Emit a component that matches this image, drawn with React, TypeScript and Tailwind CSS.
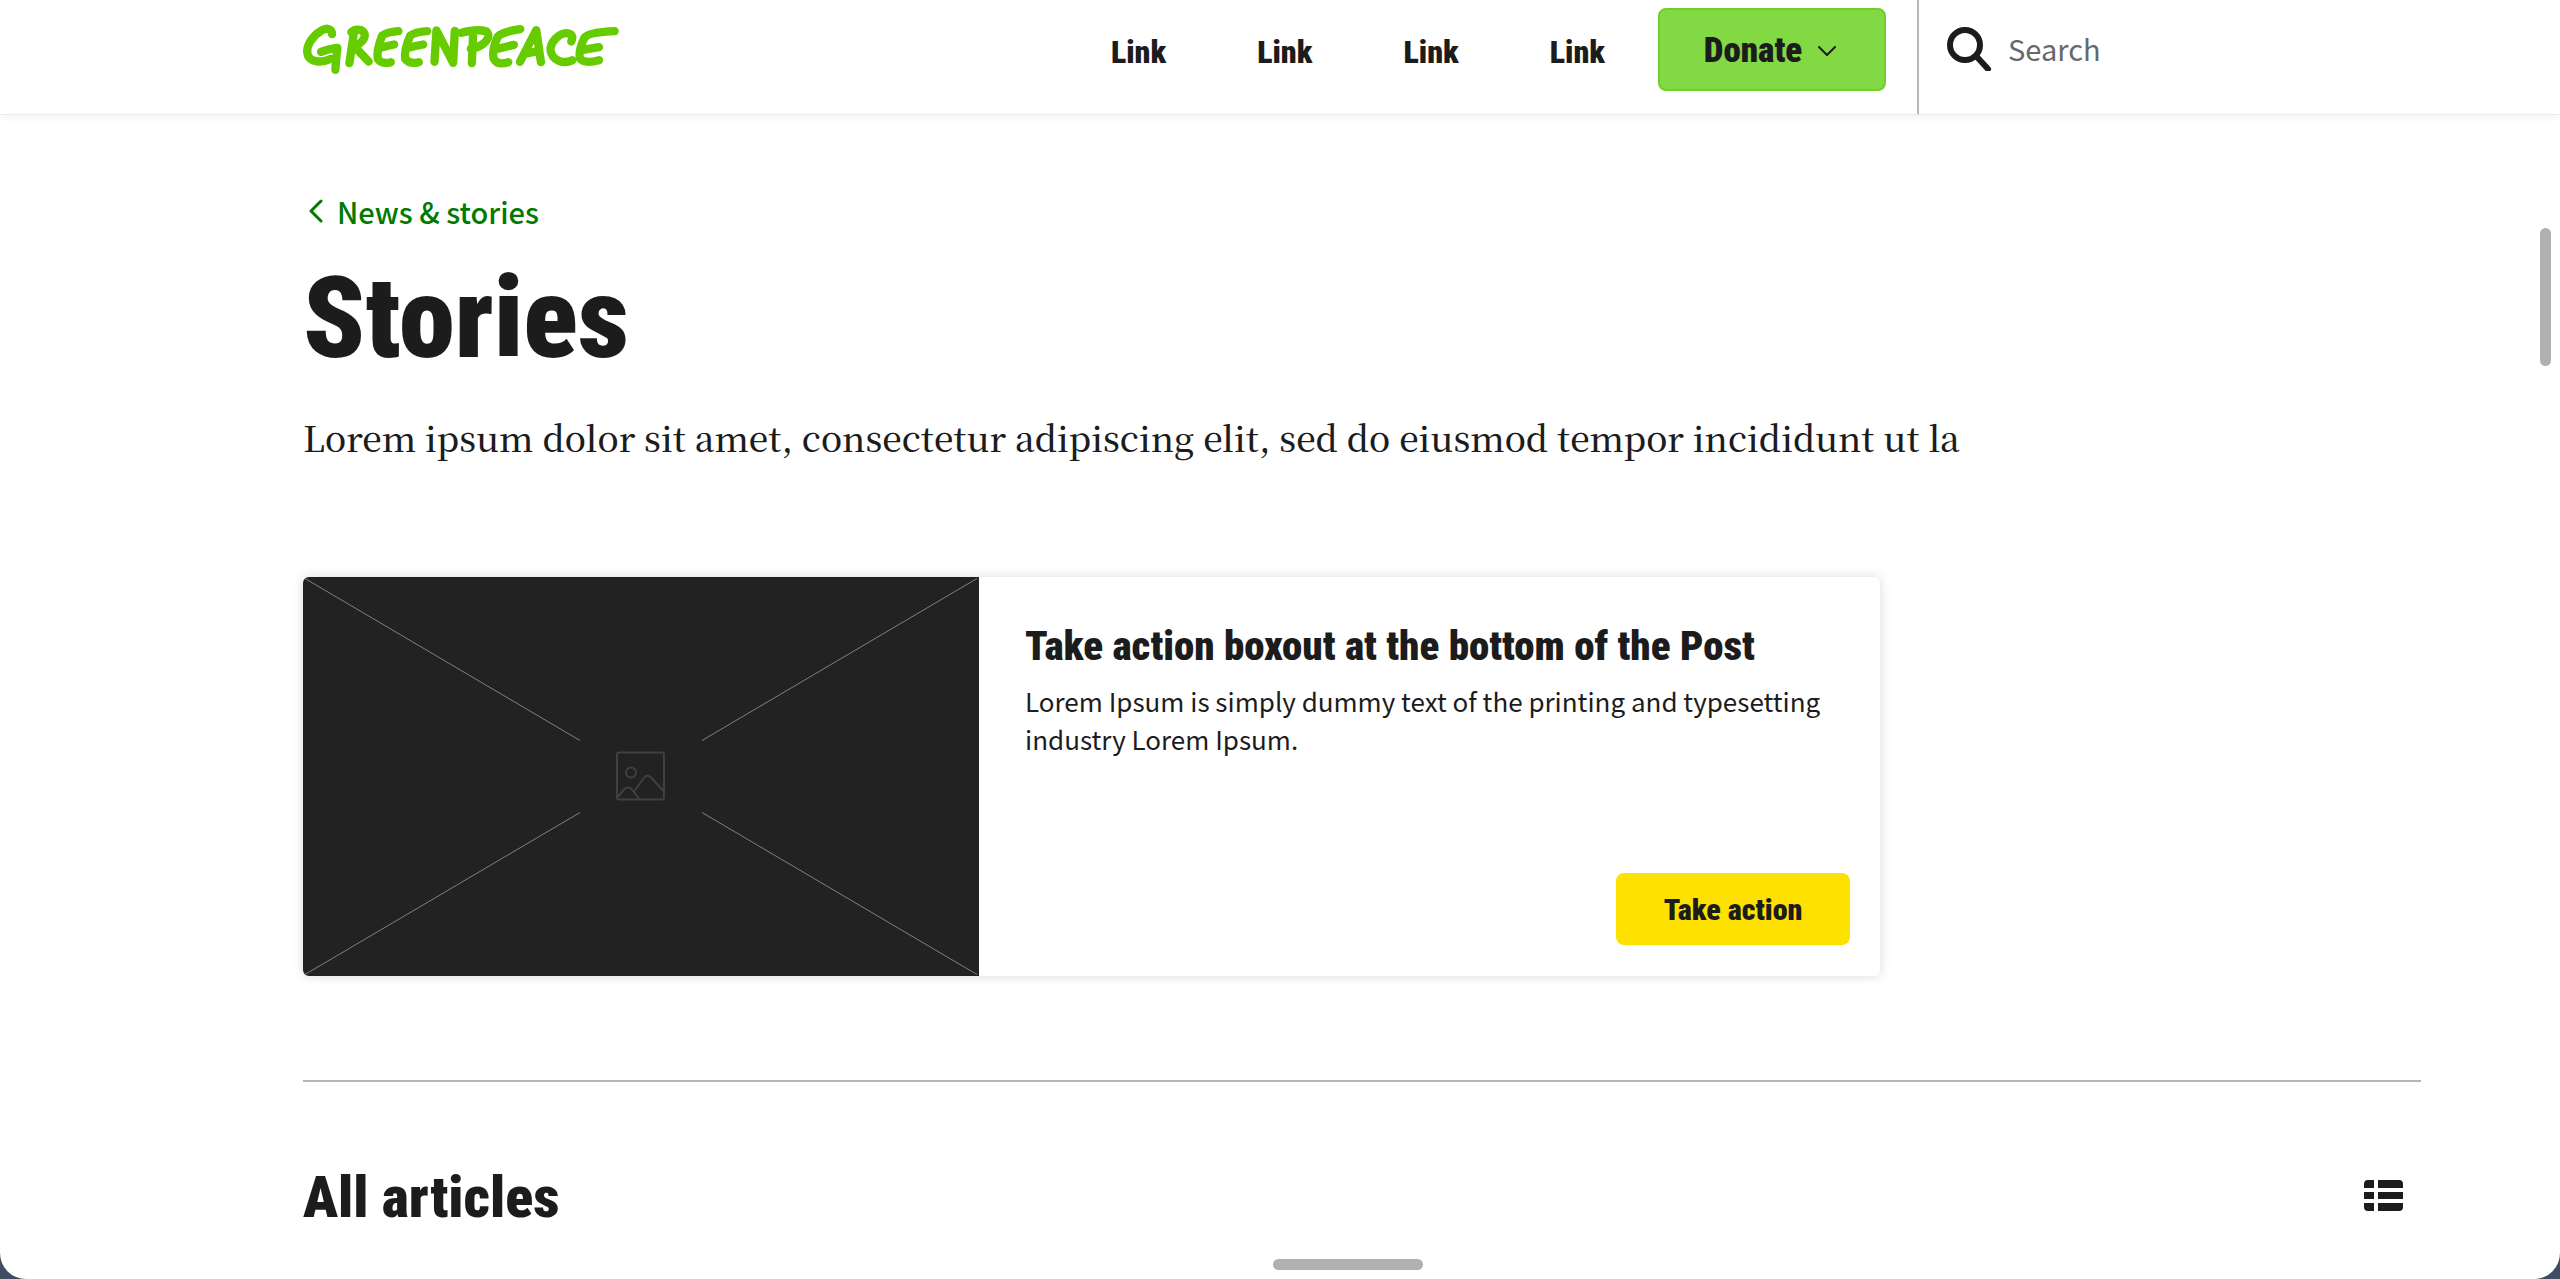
import { useState } from 'react';

const links = ['Link', 'Link', 'Link', 'Link'];

function Logo() {
  return (
    <svg
      role="img"
      aria-label="Greenpeace"
      viewBox="38 74 950 152"
      className="w-[317px] h-[51px]"
      fill="none"
      stroke="#66cc00"
      strokeWidth="25"
      strokeLinecap="round"
      strokeLinejoin="round"
    >
      <path d="M125 104C124 86 108 84 92 94C64 110 48 140 51 160C54 188 92 192 122 178" />
      <path d="M92 157Q112 149 141 145Q138 170 135 211" />
      <path d="M190 104L177 191M183 98Q194 88 212 92Q232 103 216 124Q206 136 192 141L235 186" />
      <path d="M324 95Q290 97 275 109Q258 150 262 178Q274 195 301 188M270 145Q290 139 311 135" />
      <path d="M410 95Q374 97 359 109Q341 150 344 178Q358 195 385 188M354 145Q374 139 398 135" />
      <path d="M438 93L432 187M440 97L488 190M493 94L488 190" />
      <path d="M548 98L544 191M513 100Q560 87 588 96Q603 112 578 133Q562 145 541 148" />
      <path d="M689 89Q636 97 622 111Q604 150 609 176Q620 199 653 188M616 149Q640 143 670 136" />
      <path d="M688 187L737 92L751 188M708 162L744 154" />
      <path d="M842 126Q852 103 828 101C804 101 778 130 780 152C784 184 820 195 845 182" />
      <path d="M972 95Q896 98 882 114Q864 150 867 176Q880 194 925 182M872 152Q896 148 925 143" />
    </svg>
  );
}

function Placeholder() {
  return (
    <div className="w-[676px] shrink-0 bg-[#222222]">
      <svg viewBox="0 0 676 398" className="block w-full h-full" fill="none" strokeWidth="1">
        <path
          stroke="#808080"
          d="M2 1L277 163M674 1L399 163M2 397L277 235M674 397L399 235"
        />
        <g stroke="#404040" strokeWidth="2" strokeLinejoin="round">
          <rect x="314" y="175" width="47" height="47" rx="2" />
          <circle cx="328" cy="195" r="5" />
          <path d="M315 219L322 211Q325 209 328 211L336 221M331 214L342 199Q345 197 348 200L361 214" />
        </g>
      </svg>
    </div>
  );
}

export default function App() {
  const [search, setSearch] = useState('');

  return (
    <div className="bg-[#3f4d63]">
      <div className="relative min-h-screen overflow-hidden rounded-b-[26px] bg-white text-[#1c1c1c] font-['Noto_Sans_CJK_JP','Noto_Sans',sans-serif]">
        <header className="flex items-stretch pl-[303px] border-b border-[#ebebeb] shadow-[0_2px_8px_rgba(0,0,0,0.06)]">
          <a href="#home" className="pt-6">
            <Logo />
          </a>
          <nav className="ml-auto flex items-start gap-[91px] pt-8 pr-[53px] font-['Roboto_Condensed',Roboto,sans-serif] text-[32px] leading-10 font-black">
            {links.map((link, i) => (
              <a key={i} href="#link">
                {link}
              </a>
            ))}
          </nav>
          <div className="pt-2 pb-[23px] pr-[31px]">
            <button className="flex h-[83px] w-[228px] items-center justify-center gap-4 rounded-lg border-2 border-[#6fd02c] bg-[#82d944] pt-1 pr-1 font-['Roboto_Condensed',Roboto,sans-serif] text-[35px] font-black">
              Donate
              <svg viewBox="0 0 18 11" className="w-[18px] h-[11px]" fill="none" stroke="#1c1c1c" strokeWidth="2" strokeLinecap="round" strokeLinejoin="round">
                <path d="M1 1L9 9L17 1" />
              </svg>
            </button>
          </div>
          <label className="flex w-[643px] items-center gap-4 border-l-2 border-[#b5b5b5] pl-[27px] pb-[18px]">
            <svg viewBox="0 0 46 46" className="w-[46px] h-[46px]" fill="none" stroke="#1c1c1c" strokeLinecap="round">
              <circle cx="19" cy="20" r="15" strokeWidth="6" />
              <path d="M31 32L42 44" strokeWidth="6" />
            </svg>
            <input
              type="search"
              aria-label="Search"
              placeholder="Search"
              value={search}
              onChange={(e) => setSearch(e.target.value)}
              className="w-80 text-[29px] leading-10 outline-none placeholder:text-[#65696c]"
            />
          </label>
        </header>

        <main className="pl-[303px] pr-[139px] pt-[78px] pb-12">
          <a href="#news" className="inline-flex items-center gap-[13px] pl-[5px] text-[29px] leading-9 font-medium text-[#007a00]">
            <svg viewBox="0 0 16 24" className="w-4 h-6" fill="none" stroke="#007a00" strokeWidth="3" strokeLinecap="round" strokeLinejoin="round">
              <path d="M13 2L3 12L13 22" />
            </svg>
            News &amp; stories
          </a>
          <h1 className="mt-[26px] font-['Roboto_Condensed',Roboto,sans-serif] text-[113px] leading-[128px] font-black">
            Stories
          </h1>
          <p className="mt-[26px] font-['Noto_Serif_CJK_JP','Liberation_Serif',serif] text-[35px] leading-[56px] font-medium">
            Lorem ipsum dolor sit amet, consectetur adipiscing elit, sed do eiusmod tempor incididunt ut la
          </p>

          <section className="mt-28 flex min-h-[399px] max-w-[1577px] overflow-hidden rounded-md bg-white shadow-[0_0_12px_rgba(0,0,0,0.15)]">
            <Placeholder />
            <div className="flex flex-1 flex-col pl-[46px] pr-[30px] pt-[43px] pb-[31px]">
              <h2 className="font-['Roboto_Condensed',Roboto,sans-serif] text-[41px] leading-[52px] font-black">
                Take action boxout at the bottom of the Post
              </h2>
              <p className="mt-[10px] max-w-[800px] text-[26px] leading-[38px]">
                Lorem Ipsum is simply dummy text of the printing and typesetting industry Lorem Ipsum.
              </p>
              <button className="mt-auto h-[72px] w-[234px] self-end rounded-lg bg-[#ffe100] font-['Roboto_Condensed',Roboto,sans-serif] text-[30px] font-black">
                Take action
              </button>
            </div>
          </section>

          <hr className="mt-[104px] border-t-2 border-[#b5b5b5]" />

          <div className="mt-[83px] flex items-center justify-between pr-[18px]">
            <h2 className="font-['Roboto_Condensed',Roboto,sans-serif] text-[58px] leading-[64px] font-black">
              All articles
            </h2>
            <button aria-label="List view" className="pb-1">
              <svg viewBox="0 0 39 31" className="w-[39px] h-[31px]" fill="#1c1c1c">
                <path d="M0 8V4Q0 0 4 0H10V8ZM14 0H35Q39 0 39 4V8H14ZM0 12H10V19H0ZM14 12H39V19H14ZM0 23H10V31H4Q0 31 0 27ZM14 23H39V27Q39 31 35 31H14Z" />
              </svg>
            </button>
          </div>
        </main>

        <div className="absolute right-[9px] top-[228px] h-[138px] w-[11px] rounded-full bg-[#b0b0b0]" />
        <div className="absolute bottom-[9px] left-[1273px] h-[11px] w-[150px] rounded-full bg-[#b0b0b0]" />
      </div>
    </div>
  );
}
